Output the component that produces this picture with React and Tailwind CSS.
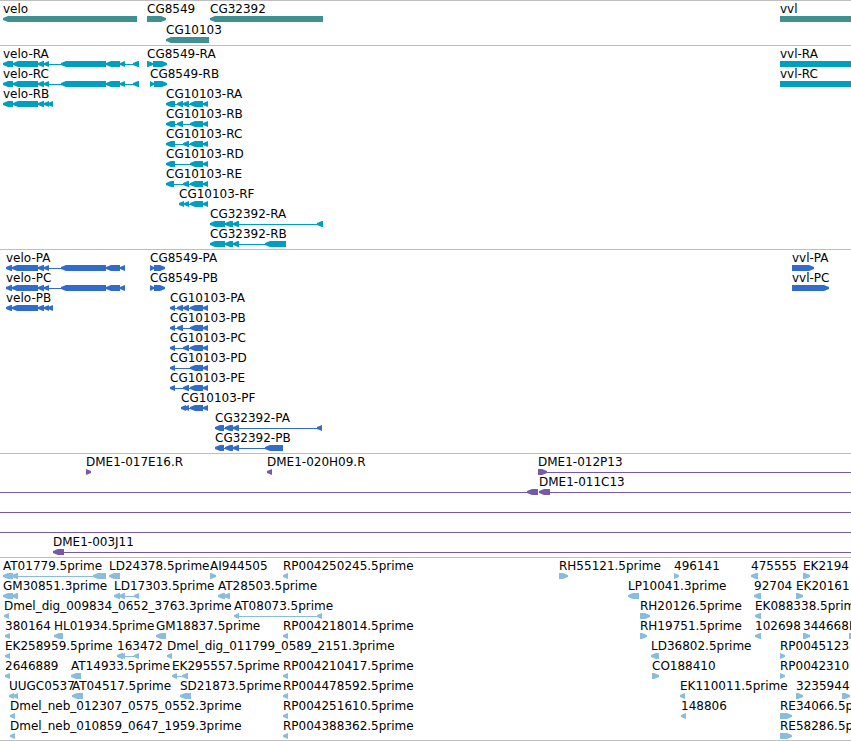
// A feature is [label, start, exons, direction, lineEnd?]; an exon is [from, to].
const FAR = 4000;

const veloEnd = [[44, 49], [61, 106], [106, 120], [120, 125]];
const core = [[190, 203], [203, 208]];

const genes = [
  [
    ["velo", 3, [[3, 137]], "l"],
    ["CG8549", 147, [[147, 166]], "r"],
    ["CG32392", 210, [[210, 323]], "l"],
    ["vvl", 780, [[780, 857]], "r"],
  ],
  [["CG10103", 166, [[166, 209]], "l"]],
];

const transcripts = [
  [
    ["velo-RA", 3, [[3, 13], [13, 38], [38, 44], ...veloEnd, [133, 139]], "l"],
    ["CG8549-RA", 147, [[147, 153], [153, 167]], "r"],
    ["vvl-RA", 780, [[780, 857]], "r"],
  ],
  [
    ["velo-RC", 3, [[3, 13], [13, 38], [38, 44], ...veloEnd, [133, 139]], "l"],
    ["CG8549-RB", 150, [[150, 154], [154, 167]], "r"],
    ["vvl-RC", 780, [[780, 857]], "r"],
  ],
  [
    ["velo-RB", 3, [[3, 13], [13, 38], [38, 44], [44, 49], [48, 53]], "l"],
    ["CG10103-RA", 166, [[166, 175], [177, 183], [183, 189], ...core], "l"],
  ],
  [["CG10103-RB", 166, [[166, 175], [177, 183], ...core], "l"]],
  [["CG10103-RC", 166, [[166, 175], [183, 189], ...core], "l"]],
  [["CG10103-RD", 166, [[166, 175], ...core], "l"]],
  [["CG10103-RE", 166, [[166, 174], [183, 189], ...core], "l"]],
  [["CG10103-RF", 179, [[179, 184], [184, 189], ...core], "l"]],
  [["CG32392-RA", 210, [[210, 225], [225, 233], [233, 239], [317, 323]], "l"]],
  [["CG32392-RB", 210, [[210, 225], [225, 233], [233, 239], [265, 286]], "l"]],
];

const proteins = [
  [
    ["velo-PA", 6, [[6, 12], [12, 38], [38, 44], ...veloEnd], "l"],
    ["CG8549-PA", 150, [[150, 154], [154, 165]], "r"],
    ["vvl-PA", 792, [[792, 814]], "r"],
  ],
  [
    ["velo-PC", 6, [[6, 12], [12, 38], [38, 44], ...veloEnd], "l"],
    ["CG8549-PB", 150, [[150, 154], [154, 165]], "r"],
    ["vvl-PC", 792, [[792, 829]], "r"],
  ],
  [
    ["velo-PB", 6, [[6, 12], [12, 38], [38, 44], [44, 49], [48, 53]], "l"],
    ["CG10103-PA", 170, [[170, 175], [177, 183], [183, 189], ...core], "l"],
  ],
  [["CG10103-PB", 170, [[170, 175], [177, 183], ...core], "l"]],
  [["CG10103-PC", 170, [[170, 175], [183, 189], ...core], "l"]],
  [["CG10103-PD", 170, [[170, 175], ...core], "l"]],
  [["CG10103-PE", 170, [[170, 175], [183, 189], ...core], "l"]],
  [["CG10103-PF", 181, [[181, 186], [184, 189], ...core], "l"]],
  [["CG32392-PA", 215, [[215, 224], [225, 233], [233, 239], [317, 322]], "l"]],
  [["CG32392-PB", 215, [[215, 224], [225, 233], [233, 239], [265, 283]], "l"]],
];

const clones = [
  [
    ["DME1-017E16.R", 86, [[86, 91]], "r"],
    ["DME1-020H09.R", 267, [[267, 272]], "l"],
    ["DME1-012P13", 538, [[538, 547]], "r", FAR],
  ],
  [
    ["", 0, [[527, 538]], "l"],
    ["DME1-011C13", 539, [[539, 550]], "l", FAR],
  ],
  [["", 0, [], "l", FAR]],
  [["", 0, [], "l", FAR]],
  [["DME1-003J11", 53, [[53, 64]], "l", FAR]],
];

const ests = [
  [
    ["AT01779.5prime", 3, [[3, 13], [12, 18], [93, 106]], "l"],
    ["LD24378.5prime", 109, [[109, 120]], "l"],
    ["AI944505", 210, [[210, 216]], "r"],
    ["RP004250245.5prime", 283, [[283, 288]], "l"],
    ["RH55121.5prime", 559, [[559, 568]], "r"],
    ["496141", 674, [[674, 679]], "r"],
    ["475555", 751, [[751, 758]], "l"],
    ["EK2194", 803, [[803, 810]], "r"],
  ],
  [
    ["GM30851.3prime", 3, [[3, 13], [12, 18]], "l"],
    ["LD17303.5prime", 114, [[114, 120], [119, 125], [134, 139]], "l"],
    ["AT28503.5prime", 218, [[218, 225], [224, 230]], "l"],
    ["LP10041.3prime", 628, [[628, 639]], "l"],
    ["92704", 754, [[754, 761]], "l"],
    ["EK20161", 796, [[796, 803]], "r"],
  ],
  [
    ["Dmel_dig_009834_0652_3763.3prime", 4, [[4, 9]], "l"],
    ["AT08073.5prime", 234, [[234, 239], [317, 322]], "l"],
    ["RH20126.5prime", 640, [[640, 650]], "r"],
    ["EK088338.5prime", 755, [[755, 761]], "l"],
  ],
  [
    ["380164", 5, [[5, 10]], "l"],
    ["HL01934.5prime", 54, [[54, 63]], "l"],
    ["GM18837.5prime", 156, [[156, 166]], "l"],
    ["RP004218014.5prime", 283, [[283, 288]], "l"],
    ["RH19751.5prime", 640, [[640, 647]], "r"],
    ["102698", 755, [[755, 761]], "l"],
    ["344668", 803, [[803, 810]], "r"],
    ["E", 849, [[849, 860]], "r"],
  ],
  [
    ["EK258959.5prime", 5, [[5, 10]], "l"],
    ["163472", 117, [[117, 123], [120, 125], [134, 139]], "l"],
    ["Dmel_dig_011799_0589_2151.3prime", 167, [[167, 172]], "l"],
    ["LD36802.5prime", 651, [[651, 659]], "l"],
    ["RP0045123", 780, [[780, 785]], "r"],
  ],
  [
    ["2646889", 5, [[5, 10]], "l"],
    ["AT14933.5prime", 71, [[71, 81]], "l"],
    ["EK295557.5prime", 172, [[172, 177], [182, 188]], "l"],
    ["RP004210417.5prime", 283, [[283, 288]], "l"],
    ["CO188410", 652, [[652, 659]], "r"],
    ["RP0042310", 780, [[780, 785]], "r"],
  ],
  [
    ["UUGC0537", 9, [[9, 14], [13, 18]], "l"],
    ["AT04517.5prime", 72, [[72, 83]], "l"],
    ["SD21873.5prime", 180, [[180, 191]], "l"],
    ["RP004478592.5prime", 283, [[283, 288]], "l"],
    ["EK110011.5prime", 680, [[680, 685]], "l"],
    ["323594", 796, [[796, 803]], "r"],
    ["4", 842, [[842, 850]], "r"],
  ],
  [
    ["Dmel_neb_012307_0575_0552.3prime", 10, [[10, 15]], "l"],
    ["RP004251610.5prime", 283, [[283, 288]], "l"],
    ["148806", 681, [[681, 686]], "l"],
    ["RE34066.5prime", 780, [[780, 792]], "r"],
  ],
  [
    ["Dmel_neb_010859_0647_1959.3prime", 10, [[10, 15]], "l"],
    ["RP004388362.5prime", 283, [[283, 288]], "l"],
    ["RE58286.5prime", 780, [[780, 792]], "r"],
  ],
];

// A bar whose last few pixels narrow down to a blunt tip.
function arrow([from, to], dir) {
  const width = to - from;
  const tip = dir === "l" ? from : to;
  const back = dir === "l" ? to : from;
  const sign = dir === "l" ? 1 : -1;
  const shoulder = tip + sign * Math.min(5, width);
  return `${tip},2 ${shoulder},0 ${back},0 ${back},6 ${shoulder},6 ${tip},4`;
}

function Glyph({ feature }) {
  const [, start, exons, dir, lineEnd] = feature;
  const last = exons.length ? exons[exons.length - 1][1] : start;
  return (
    <g>
      <rect x={start} y="3" width={(lineEnd ?? last - 1) - start} height="1" shapeRendering="crispEdges" />
      {exons.map((exon, i) => (
        <polygon key={i} points={arrow(exon, dir)} />
      ))}
    </g>
  );
}

function Row({ features, rowClass }) {
  return (
    <div className={`relative pt-[15px] ${rowClass}`}>
      {features.map(([label, start], i) =>
        label ? (
          <span key={i} className="absolute top-0 leading-4 whitespace-nowrap" style={{ left: start }}>
            {label}
          </span>
        ) : null,
      )}
      <svg className="block h-[6px] w-full fill-current" aria-hidden="true">
        {features.map((feature, i) => (
          <Glyph key={i} feature={feature} />
        ))}
      </svg>
    </div>
  );
}

function Track({ name, rows, colour, rowClass = "h-5", className = "pb-[3px]" }) {
  return (
    <section aria-label={name} className={`border-t border-[#bebebe] ${className}`}>
      {rows.map((features, i) => (
        <Row key={i} features={features} rowClass={`${rowClass} ${colour}`} />
      ))}
    </section>
  );
}

export default function App() {
  return (
    <main className="w-full overflow-hidden border-b border-[#bebebe] bg-white font-['DejaVu_Sans',sans-serif] text-[12px] [&_span]:text-black">
      <Track name="Genes" rows={genes} colour="text-[#408f91]" rowClass="h-[21px]" className="pb-[2px]" />
      <Track name="Transcripts" rows={transcripts} colour="text-[#009fbf]" />
      <Track name="Proteins" rows={proteins} colour="text-[#316ccc]" />
      <Track name="Clones" rows={clones} colour="text-[#7759a8]" />
      <Track name="ESTs" rows={ests} colour="text-[#88bddd]" className="pb-[2px]" />
    </main>
  );
}
